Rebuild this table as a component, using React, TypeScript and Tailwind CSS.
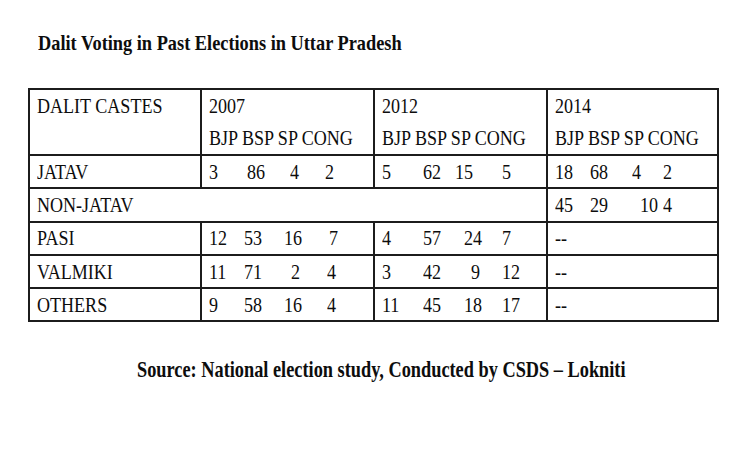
import React from "react";

type Num = [string, string];

const T = ({ children }: { children: React.ReactNode }) => (
  <span className="inline-block origin-left scale-x-[0.82] whitespace-nowrap">{children}</span>
);

const Nums = ({ items }: { items: Num[] }) => (
  <div className="flex items-center">
    {items.map(([t, w], i) => (
      <span key={i} className={w + " shrink-0"}>
        <T>{t}</T>
      </span>
    ))}
  </div>
);

const cell = "border-l-2 border-t-2 border-[#1c1c1c] pl-[7px]";
const row = "h-[33.3px] flex items-center";

export default function App() {
  return (
    <div className="w-[750px] h-[450px] bg-white text-[#0d0d0d] [font-family:Liberation_Serif,serif] overflow-hidden">
      <div className="pt-[32px] pl-[38px] h-[54px] text-[22px] leading-[22px] font-bold">
        <span className="inline-block origin-left scale-x-[0.833] whitespace-nowrap">
          Dalit Voting in Past Elections in Uttar Pradesh
        </span>
      </div>

      <div className="mt-[34px] ml-[28px] w-[691px] grid grid-cols-[172px_173px_173px_171px] border-r-2 border-b-2 border-[#1c1c1c] text-[22px] leading-[32px]">
        {/* header */}
        <div className={cell + " h-[66px]"}>
          <T>DALIT CASTES</T>
        </div>
        <div className={cell + " h-[66px]"}>
          <div><T>2007</T></div>
          <div><T>BJP BSP SP CONG</T></div>
        </div>
        <div className={cell + " h-[66px]"}>
          <div><T>2012</T></div>
          <div><T>BJP BSP SP CONG</T></div>
        </div>
        <div className={cell + " h-[66px]"}>
          <div><T>2014</T></div>
          <div><T>BJP BSP SP CONG</T></div>
        </div>

        {/* JATAV */}
        <div className={cell + " " + row}><T>JATAV</T></div>
        <div className={cell + " " + row}>
          <Nums items={[["3", "w-[38px]"], ["86", "w-[43px]"], ["4", "w-[35px]"], ["2", ""]]} />
        </div>
        <div className={cell + " " + row}>
          <Nums items={[["5", "w-[41px]"], ["62", "w-[32px]"], ["15", "w-[47px]"], ["5", ""]]} />
        </div>
        <div className={cell + " " + row}>
          <Nums items={[["18", "w-[35px]"], ["68", "w-[42px]"], ["4", "w-[31px]"], ["2", ""]]} />
        </div>

        {/* NON-JATAV */}
        <div className={cell + " " + row + " col-span-3"}><T>NON-JATAV</T></div>
        <div className={cell + " " + row}>
          <Nums items={[["45", "w-[35px]"], ["29", "w-[50px]"], ["10", "w-[23px]"], ["4", ""]]} />
        </div>

        {/* PASI */}
        <div className={cell + " " + row}><T>PASI</T></div>
        <div className={cell + " " + row}>
          <Nums items={[["12", "w-[35px]"], ["53", "w-[40px]"], ["16", "w-[45px]"], ["7", ""]]} />
        </div>
        <div className={cell + " " + row}>
          <Nums items={[["4", "w-[41px]"], ["57", "w-[41px]"], ["24", "w-[38px]"], ["7", ""]]} />
        </div>
        <div className={cell + " " + row}><T>--</T></div>

        {/* VALMIKI */}
        <div className={cell + " " + row}><T>VALMIKI</T></div>
        <div className={cell + " " + row}>
          <Nums items={[["11", "w-[35px]"], ["71", "w-[47px]"], ["2", "w-[36px]"], ["4", ""]]} />
        </div>
        <div className={cell + " " + row}>
          <Nums items={[["3", "w-[41px]"], ["42", "w-[48px]"], ["9", "w-[31px]"], ["12", ""]]} />
        </div>
        <div className={cell + " " + row}><T>--</T></div>

        {/* OTHERS */}
        <div className={cell + " " + row}><T>OTHERS</T></div>
        <div className={cell + " " + row}>
          <Nums items={[["9", "w-[35px]"], ["58", "w-[40px]"], ["16", "w-[43px]"], ["4", ""]]} />
        </div>
        <div className={cell + " " + row}>
          <Nums items={[["11", "w-[41px]"], ["45", "w-[41px]"], ["18", "w-[38px]"], ["17", ""]]} />
        </div>
        <div className={cell + " " + row}><T>--</T></div>
      </div>

      <div className="mt-[35px] pl-[137px] text-[24px] leading-[24px] font-bold">
        <span className="inline-block origin-left scale-x-[0.763] whitespace-nowrap">
          Source: National election study, Conducted by CSDS – Lokniti
        </span>
      </div>
    </div>
  );
}
